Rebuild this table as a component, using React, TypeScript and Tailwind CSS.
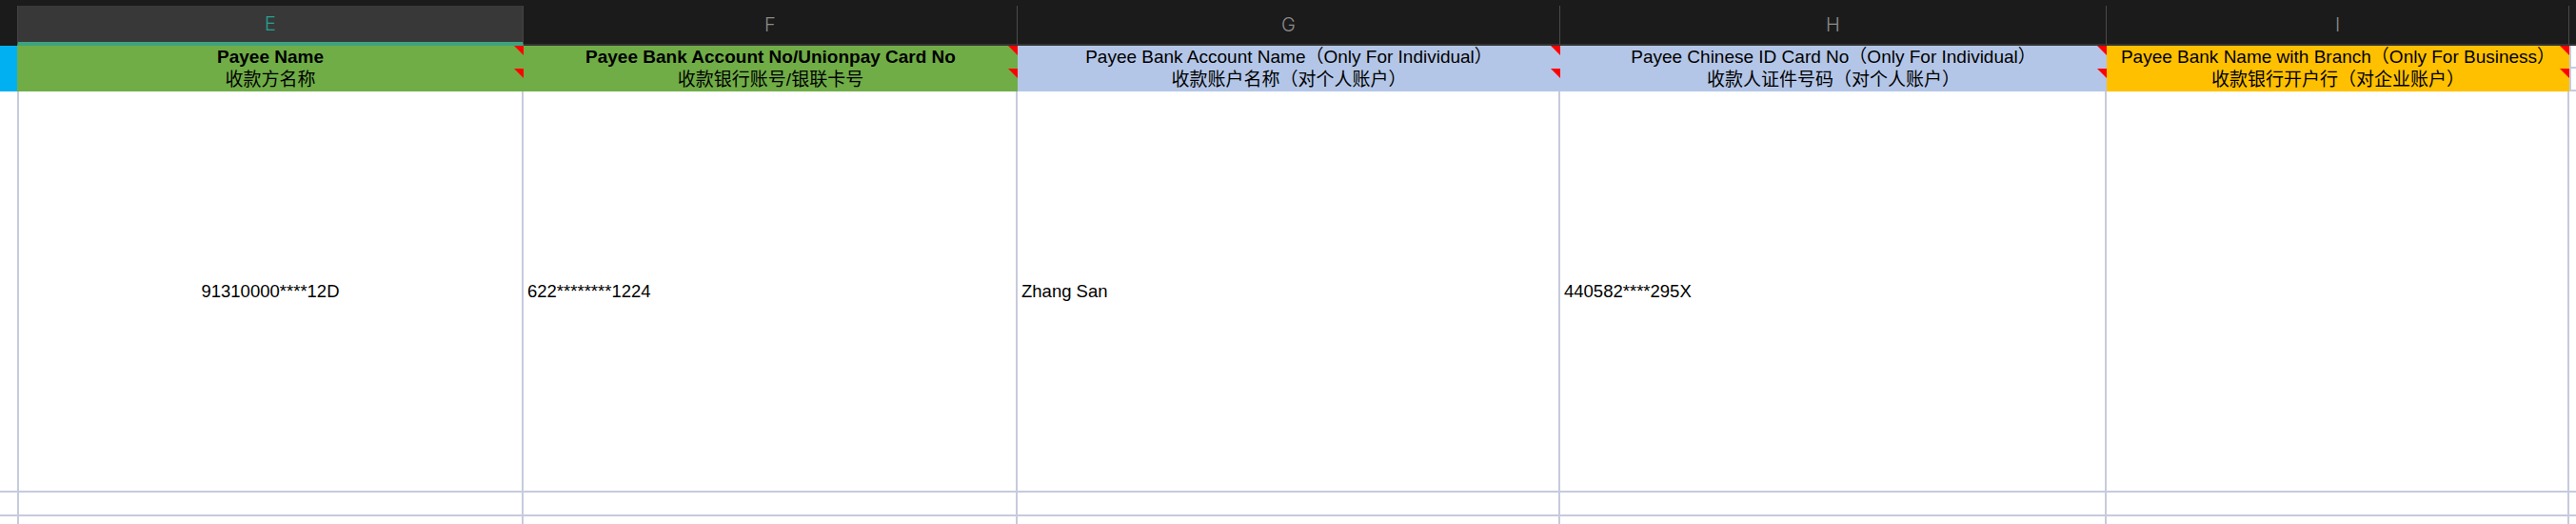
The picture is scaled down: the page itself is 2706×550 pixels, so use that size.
import React from 'react';

type Col = {
  letter: string;
  width: number;
  bg: string;
  bold: boolean;
  en: string;
  zh: string;
  value: string;
  align: 'center' | 'left';
};

const cols: Col[] = [
  {
    letter: 'E',
    width: 532,
    bg: 'bg-[#70ad47]',
    bold: true,
    en: 'Payee Name',
    zh: '收款方名称',
    value: '91310000****12D',
    align: 'center',
  },
  {
    letter: 'F',
    width: 519,
    bg: 'bg-[#70ad47]',
    bold: true,
    en: 'Payee Bank Account No/Unionpay Card No',
    zh: '收款银行账号/银联卡号',
    value: '622********1224',
    align: 'left',
  },
  {
    letter: 'G',
    width: 570,
    bg: 'bg-[#b4c6e7]',
    bold: false,
    en: 'Payee Bank Account Name（Only For Individual）',
    zh: '收款账户名称（对个人账户）',
    value: 'Zhang San',
    align: 'left',
  },
  {
    letter: 'H',
    width: 574,
    bg: 'bg-[#b4c6e7]',
    bold: false,
    en: 'Payee Chinese ID Card No（Only For Individual）',
    zh: '收款人证件号码（对个人账户）',
    value: '440582****295X',
    align: 'left',
  },
  {
    letter: 'I',
    width: 486,
    bg: 'bg-[#ffc000]',
    bold: false,
    en: 'Payee Bank Name with Branch（Only For Business）',
    zh: '收款银行开户行（对企业账户）',
    value: '',
    align: 'left',
  },
];

const font = { fontFamily: '"Liberation Sans", Arial, "Noto Sans CJK SC", sans-serif' };

function Flag({ top }: { top: string }) {
  return (
    <svg className={`absolute right-0 ${top}`} width="10" height="10" viewBox="0 0 10 10">
      <polygon points="0,0 10,0 10,10" fill="#ff0000" />
    </svg>
  );
}

export default function App() {
  return (
    <div className="w-[2706px] h-[550px] overflow-hidden bg-white" style={font}>
      {/* column letters */}
      <div className="flex h-[48px] items-end bg-[#1b1b1b]">
        <div className="w-[18px] h-full shrink-0" />
        {cols.map((c) =>
          c.letter === 'E' ? (
            <div
              key={c.letter}
              style={{ width: c.width }}
              className="shrink-0 h-[42px] bg-[#383838] border-x border-[#444] border-b-4 border-b-[#3fa27f] flex items-center justify-center text-[20px] font-light text-[#23a394] font-['Inter']"
            >
              {c.letter}
            </div>
          ) : (
            <div
              key={c.letter}
              style={{ width: c.width }}
              className="shrink-0 h-[42px] border-r border-[#4a4a4a] border-b-2 border-b-[#333] flex items-center justify-center text-[20px] font-light text-[#8c8c8c] font-['Inter']"
            >
              {c.letter}
            </div>
          )
        )}
        <div className="flex-1 h-[42px] border-b-2 border-[#333]" />
      </div>

      {/* header row */}
      <div className="flex h-[48px]">
        <div className="w-[18px] shrink-0 bg-[#00b0f0]" />
        {cols.map((c) => (
          <div
            key={c.letter}
            style={{ width: c.width }}
            className={`relative shrink-0 ${c.bg} flex flex-col items-center justify-center text-[19px] leading-[24px] text-black`}
          >
            <div className={`whitespace-nowrap ${c.bold ? 'font-bold' : ''}`}>{c.en}</div>
            <div className="whitespace-nowrap">{c.zh}</div>
            <Flag top="top-0" />
            <Flag top="top-[24px]" />
          </div>
        ))}
        <div className="flex-1 flex flex-col border-l-2 border-[#c6cbdc]">
          <div className="h-[24px] border-b-2 border-[#c6cbdc]" />
          <div className="flex-1 border-b-2 border-[#c6cbdc]" />
        </div>
      </div>

      {/* data row */}
      <div className="flex h-[421px] border-b-2 border-[#c6cbdc]">
        <div className="w-[20px] shrink-0 border-r-2 border-[#c6cbdc]" />
        {cols.map((c, i) => (
          <div
            key={c.letter}
            style={{ width: i === 0 ? c.width - 2 : c.width }}
            className={`shrink-0 border-r-2 border-[#c6cbdc] flex items-center text-[18.5px] text-black ${
              c.align === 'center' ? 'justify-center' : 'justify-start pl-[4px]'
            }`}
          >
            {c.value}
          </div>
        ))}
        <div className="flex-1" />
      </div>

      {/* empty rows */}
      {[25, 10].map((h, r) => (
        <div key={r} className="flex border-b-2 border-[#c6cbdc]" style={{ height: h }}>
          <div className="w-[20px] shrink-0 border-r-2 border-[#c6cbdc]" />
          {cols.map((c, i) => (
            <div
              key={c.letter}
              style={{ width: i === 0 ? c.width - 2 : c.width }}
              className="shrink-0 border-r-2 border-[#c6cbdc]"
            />
          ))}
          <div className="flex-1" />
        </div>
      ))}
    </div>
  );
}
